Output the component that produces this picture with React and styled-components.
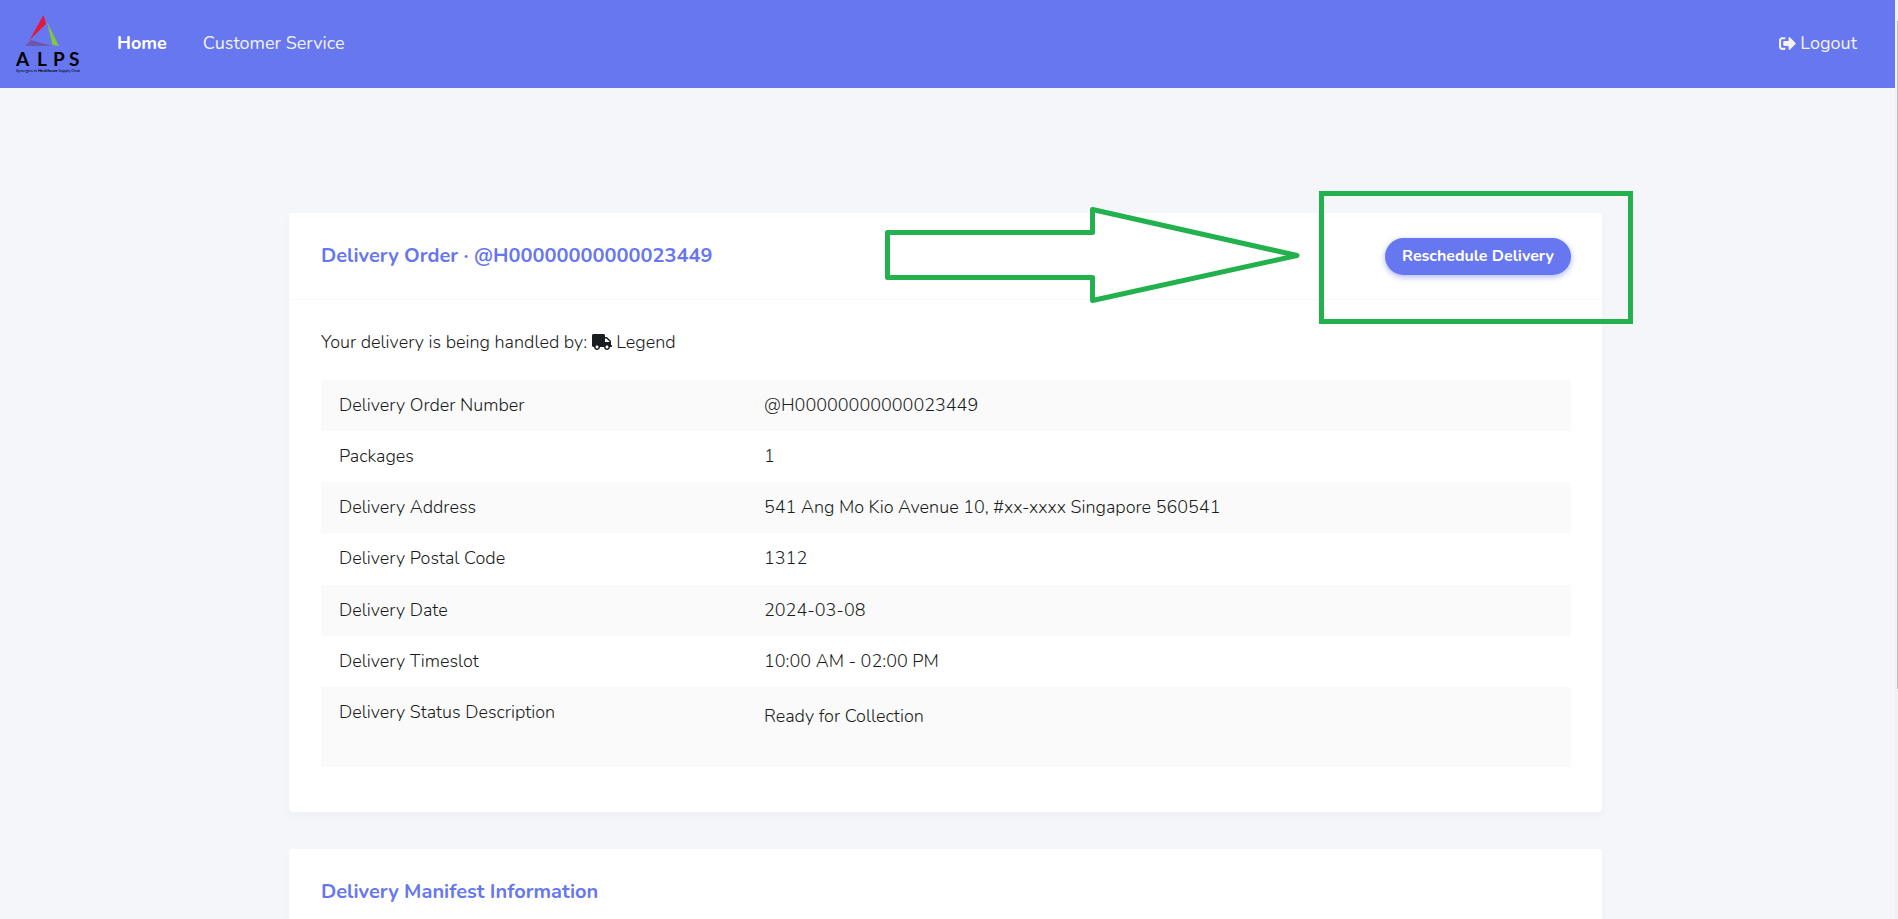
import React from "react";
import styled, { createGlobalStyle } from "styled-components";
import { FaSignOutAlt, FaTruck } from "react-icons/fa";

const primary = "#6777ef";
const marker = "#22b14c";

const GlobalStyle = createGlobalStyle`
  * {
    box-sizing: border-box;
  }

  html {
    overflow: hidden;
  }

  body {
    margin: 0;
    background: #f4f6f9;
    color: #191d21;
    font-family: "Nunito", "Lato", sans-serif;
    font-size: 18px;
    font-weight: 300;
    line-height: 28px;
  }
`;

const Page = styled.div`
  display: flex;
  height: 100vh;
  overflow: hidden;
`;

const Content = styled.div`
  flex: 1;
  min-width: 0;
`;

const ScrollTrack = styled.div`
  flex: 0 0 3px;
  padding: 21px 0 0 2px;
  background: #f1f1f1;
`;

const ScrollThumb = styled.div`
  height: 668px;
  max-height: 75%;
  background: #c1c1c1;
`;

const Navbar = styled.nav`
  height: 88px;
  padding: 0 38px 2px 16px;
  display: flex;
  align-items: center;
  background: ${primary};
`;

const Brand = styled.a`
  display: flex;
  margin-right: 37px;
`;

const NavLinks = styled.div`
  flex: 1;
  display: flex;
  gap: 36px;
`;

const NavLink = styled.a`
  display: flex;
  align-items: center;
  gap: 4px;
  color: ${(props) => (props.$active ? "#fff" : "#f2f2f2")};
  font-weight: ${(props) => (props.$active ? 700 : 400)};
  text-decoration: none;

  svg {
    font-size: 17px;
  }
`;

const Main = styled.main`
  max-width: 1317px;
  margin: 0 auto;
  padding: 125px 4px 0 0;
`;

const Card = styled.section`
  position: relative;
  margin-bottom: 37px;
  background: #fff;
  border-radius: 4px;
  box-shadow: 0 4px 8px rgba(0, 0, 0, 0.03);
`;

const CardHeader = styled.header`
  min-height: 87px;
  padding: 0 31px 0 32px;
  display: flex;
  align-items: center;
  justify-content: space-between;
  border-bottom: 1px solid #f9f9f9;
`;

const CardTitle = styled.h4`
  margin: 0;
  color: ${primary};
  font-size: 20px;
  font-weight: 700;
`;

const CardBody = styled.div`
  padding: 28px 31px 45px 32px;
`;

const PillButton = styled.button`
  height: 37px;
  padding: 0 17px;
  border: 0;
  border-radius: 30px;
  background: ${primary};
  box-shadow: 0 2px 6px #acb5f6;
  color: #fff;
  font-family: inherit;
  font-size: 16px;
  font-weight: 700;
  cursor: pointer;
`;

const Handler = styled.p`
  margin: 0 0 24px;

  svg {
    width: 20px;
    height: 16px;
    vertical-align: -2px;
  }
`;

const DetailsTable = styled.table`
  width: 100%;
  height: 387px;
  border-collapse: collapse;

  tr:nth-child(odd) {
    background: #fafafa;
  }
`;

const Label = styled.th`
  width: 34%;
  height: 51px;
  padding: 11px 18px 0;
  font-weight: 300;
  text-align: left;
  vertical-align: top;
`;

const Value = styled(Label).attrs({ as: "td" })`
  width: auto;
`;

const Status = styled.p`
  margin: 0;
  padding: 4px 0 37px;
`;

const HighlightBox = styled.div`
  position: absolute;
  top: -22px;
  right: -31px;
  width: 314px;
  height: 133px;
  border: 5px solid ${marker};
  pointer-events: none;
`;

const HighlightArrow = styled.svg`
  position: absolute;
  top: -8px;
  right: 300px;
  pointer-events: none;
`;

const details = [
  ["Delivery Order Number", "@H00000000000023449"],
  ["Packages", "1"],
  ["Delivery Address", "541 Ang Mo Kio Avenue 10, #xx-xxxx Singapore 560541"],
  ["Delivery Postal Code", "1312"],
  ["Delivery Date", "2024-03-08"],
  ["Delivery Timeslot", "10:00 AM - 02:00 PM"],
  ["Delivery Status Description", <Status>Ready for Collection</Status>],
];

function Logo() {
  return (
    <svg width="64" height="60" viewBox="0 -1 64 60" role="img" aria-label="ALPS">
      <path d="M27.5 1 L30 10 L13.5 26 Z" fill="#e5173a" />
      <path d="M31 8 L43 32 L36.5 31 Z" fill="#84c63c" />
      <path d="M14.5 26 L36 32 L9.5 32 Z" fill="#7155a6" />
      <text
        x="0 21 37 53"
        y="52"
        fontFamily="Lato, sans-serif"
        fontSize="19"
        fontWeight="700"
      >
        ALPS
      </text>
      <text x="0" y="58" fontFamily="Lato, sans-serif" fontSize="4" fontWeight="400">
        Synergies in <tspan fontWeight="700">Healthcare</tspan> Supply Chain
      </text>
    </svg>
  );
}

export default function App() {
  return (
    <>
      <GlobalStyle />
      <Page>
        <Content>
          <Navbar>
            <Brand href="#">
              <Logo />
            </Brand>
            <NavLinks>
              <NavLink href="#" $active>
                Home
              </NavLink>
              <NavLink href="#">Customer Service</NavLink>
            </NavLinks>
            <NavLink href="#">
              <FaSignOutAlt />
              Logout
            </NavLink>
          </Navbar>
          <Main>
            <Card>
              <CardHeader>
                <CardTitle>Delivery Order · @H00000000000023449</CardTitle>
                <PillButton type="button">Reschedule Delivery</PillButton>
              </CardHeader>
              <CardBody>
                <Handler>
                  Your delivery is being handled by: <FaTruck /> Legend
                </Handler>
                <DetailsTable>
                  <tbody>
                    {details.map(([label, value]) => (
                      <tr key={label}>
                        <Label scope="row">{label}</Label>
                        <Value>{value}</Value>
                      </tr>
                    ))}
                  </tbody>
                </DetailsTable>
              </CardBody>
              <HighlightArrow width="418" height="100" viewBox="0 0 418 100">
                <path
                  d="M3.5 27.5 H208.5 V4.5 L413 50.5 L208.5 95.5 V72.5 H3.5 Z"
                  fill="none"
                  stroke={marker}
                  strokeWidth="5"
                  strokeLinejoin="round"
                />
              </HighlightArrow>
              <HighlightBox />
            </Card>
            <Card>
              <CardHeader>
                <CardTitle>Delivery Manifest Information</CardTitle>
              </CardHeader>
            </Card>
          </Main>
        </Content>
        <ScrollTrack>
          <ScrollThumb />
        </ScrollTrack>
      </Page>
    </>
  );
}
